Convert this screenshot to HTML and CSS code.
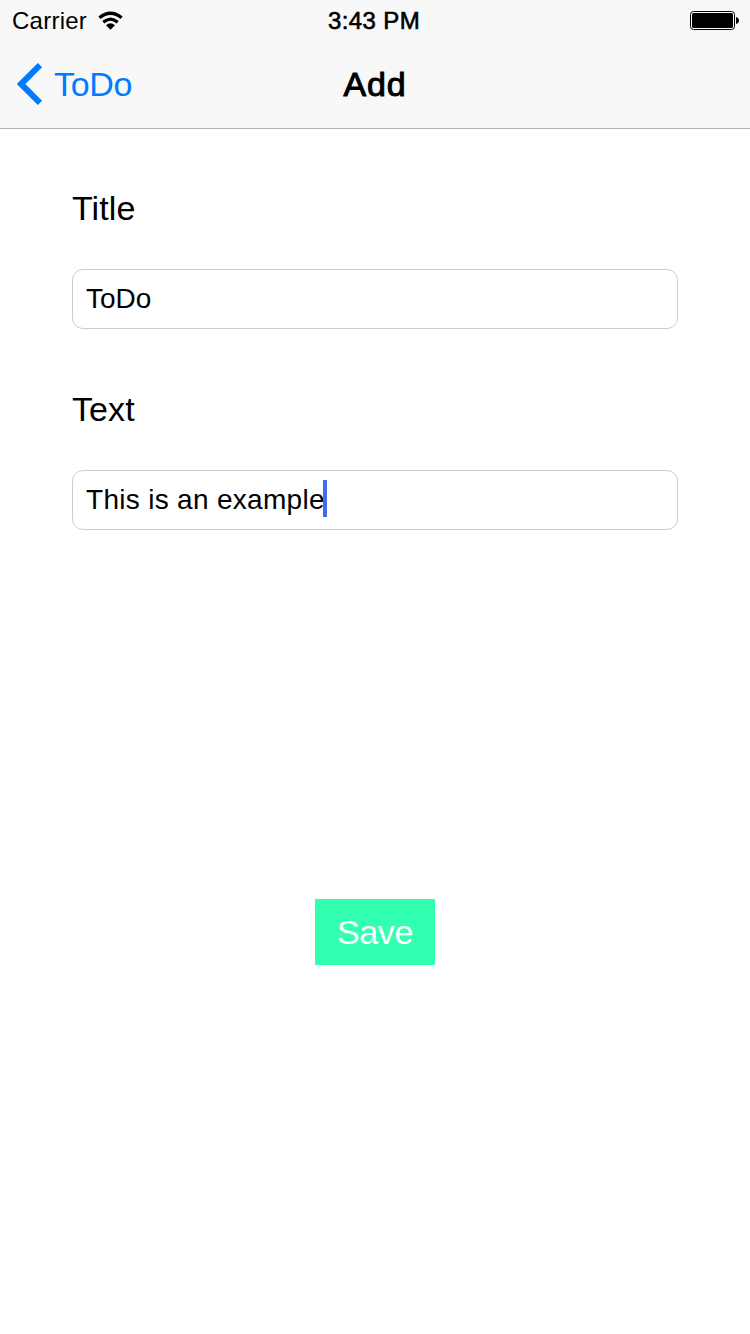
FILE: index.html
```html
<!DOCTYPE html>
<html lang="en">
<head>
<meta charset="utf-8">
<title>Add</title>
<link rel="stylesheet" href="styles.css">
</head>
<body>
<header class="header">
  <div class="status">
    <div class="status-left">
      <span class="carrier">Carrier</span>
      <svg class="wifi" width="26" height="20" viewBox="0 0 26 20" fill="none" stroke="#000" stroke-width="3.3">
        <path d="M1.4 6.8Q12.5 -2.4 23.6 6.8"/>
        <path d="M5.3 11.2Q12.5 5 19.7 11.2"/>
        <path d="M8 14.2Q12.5 10.2 17 14.2L12.5 18.8Z" fill="#000" stroke="none"/>
      </svg>
    </div>
    <time class="clock">3:43 PM</time>
    <svg class="battery" width="50" height="20" viewBox="0 0 50 20">
      <rect x=".5" y=".5" width="44" height="18" rx="3" fill="#fff" stroke="#000"/>
      <rect x="2" y="2" width="41" height="15" rx="1.5" fill="#000"/>
      <path d="M46 6Q49 7 49 9.5T46 13Z" fill="#000"/>
    </svg>
  </div>
  <nav class="nav">
    <a class="back">
      <svg class="chevron" width="26" height="42" viewBox="0 0 26 42" fill="none" stroke="#007aff" stroke-width="6">
        <path d="M23 2.2L4 21L23 39.8"/>
      </svg>
      <span class="back-label">ToDo</span>
    </a>
    <h1 class="title">Add</h1>
    <span></span>
  </nav>
</header>
<main class="form">
  <label class="label">Title</label>
  <div class="field"><span>ToDo</span></div>
  <label class="label">Text</label>
  <div class="field"><span class="typed">This is an example</span><i class="caret"></i></div>
  <button class="save">Save</button>
</main>
</body>
</html>
```
FILE: styles.css
```css
* { box-sizing: border-box; }
body {
  margin: 0;
  min-height: 1334px;
  background: #fff;
  color: #000;
  font-family: "Liberation Sans", Arial, sans-serif;
}
.header { height: 129px; background: #f8f8f8; border-bottom: 1px solid #b2b2b2; }
.status, .nav { display: grid; grid-template-columns: 1fr auto 1fr; align-items: center; }
.status { height: 40px; padding: 1px 10px 0 12px; font-size: 24px; line-height: 39px; }
.status-left { display: flex; align-items: center; gap: 11px; }
.carrier { letter-spacing: .25px; }
.clock { margin-right: 4px; letter-spacing: .4px; -webkit-text-stroke: .6px #000; }
.battery { justify-self: end; }
.nav { height: 88px; padding: 0 17px; font-size: 34px; line-height: 88px; }
.back { display: flex; align-items: center; gap: 11px; color: #007aff; }
.back-label { letter-spacing: -.3px; }
.title { margin: 0; font-size: 34px; font-weight: 400; letter-spacing: .8px; -webkit-text-stroke: 1px #000; }
.form { display: flex; flex-direction: column; padding: 59px 72px 0; }
.label { height: 40px; margin-bottom: 41px; font-size: 34px; line-height: 40px; letter-spacing: .1px; }
.field {
  display: flex;
  align-items: center;
  height: 60px;
  margin-bottom: 60px;
  padding-left: 13px;
  border: 1px solid #ccc;
  border-radius: 11px;
  font-size: 28px;
  line-height: 58px;
}
.typed { letter-spacing: .3px; }
.caret { width: 4px; height: 37px; margin: 0 0 3px -2px; background: #426bf2; }
.save {
  align-self: center;
  width: 120px;
  height: 66px;
  margin-top: 309px;
  padding: 0;
  border: 0;
  background: #32ffaf;
  color: #fff;
  font: 34px/66px "Liberation Sans", Arial, sans-serif;
  letter-spacing: -.4px;
}
```
